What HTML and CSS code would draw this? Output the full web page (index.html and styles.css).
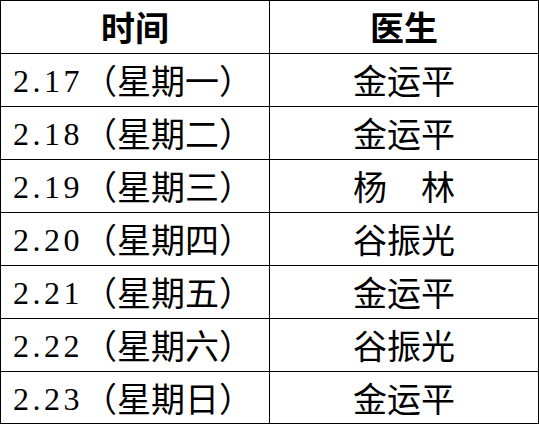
FILE: index.html
```html
<!DOCTYPE html>
<html>
<head>
<meta charset="utf-8">
<title>值班表</title>
<link rel="stylesheet" href="styles.css">
</head>
<body>
<table class="duty">
  <thead>
    <tr><th lang="zh-CN">时间</th><th lang="zh-CN">医生</th></tr>
  </thead>
  <tbody>
    <tr><td class="date"><span class="num">2.17</span><span class="cjk" lang="zh-CN">（星期一）</span></td><td class="doc" lang="zh-CN">金运平</td></tr>
    <tr><td class="date"><span class="num">2.18</span><span class="cjk" lang="zh-CN">（星期二）</span></td><td class="doc" lang="zh-CN">金运平</td></tr>
    <tr><td class="date"><span class="num">2.19</span><span class="cjk" lang="zh-CN">（星期三）</span></td><td class="doc" lang="zh-CN">杨　林</td></tr>
    <tr><td class="date"><span class="num">2.20</span><span class="cjk" lang="zh-CN">（星期四）</span></td><td class="doc" lang="zh-CN">谷振光</td></tr>
    <tr><td class="date"><span class="num">2.21</span><span class="cjk" lang="zh-CN">（星期五）</span></td><td class="doc" lang="zh-CN">金运平</td></tr>
    <tr><td class="date"><span class="num">2.22</span><span class="cjk" lang="zh-CN">（星期六）</span></td><td class="doc" lang="zh-CN">谷振光</td></tr>
    <tr><td class="date"><span class="num">2.23</span><span class="cjk" lang="zh-CN">（星期日）</span></td><td class="doc" lang="zh-CN">金运平</td></tr>
  </tbody>
</table>
</body>
</html>
```

FILE: styles.css
```css
html, body {
  margin: 0;
  padding: 0;
  background: #ffffff;
}

.duty {
  border-collapse: separate;
  border-spacing: 0;
  border-top: 1px solid #000;
  border-left: 1px solid #000;
  table-layout: fixed;
  width: 539px;
  font-family: "Noto Sans CJK SC", sans-serif;
  font-size: 34px;
  color: #000;
}

.duty th,
.duty td {
  width: 268px;
  height: 52px;
  padding: 0;
  border-right: 1px solid #000;
  border-bottom: 1px solid #000;
  vertical-align: middle;
  white-space: nowrap;
  line-height: 1;
}

.duty th {
  font-weight: bold;
  text-align: center;
}

.duty tbody tr:last-child td {
  height: 51px;
}

.date {
  text-align: left;
  padding-left: 12px !important;
}

.duty .num {
  font-family: "Liberation Serif", serif;
  font-size: 32px;
  letter-spacing: 3.5px;
  vertical-align: 2px;
}

.doc {
  text-align: center;
}
```
